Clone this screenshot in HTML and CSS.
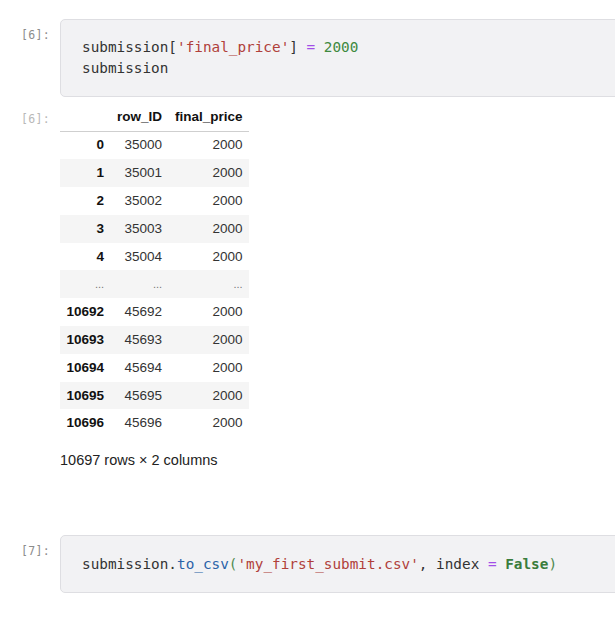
FILE: index.html
```html
<!DOCTYPE html>
<html>
<head>
<meta charset="utf-8">
<link rel="stylesheet" href="styles.css">
</head>
<body>
<div class="notebook">
  <div class="cell cell-first">
    <div class="prompt in-prompt">[6]:</div>
    <div class="input"><pre class="code">submission[<span class="str">'final_price'</span>] <span class="op">=</span> <span class="num">2000</span>
submission</pre></div>
  </div>
  <div class="cell output-cell">
    <div class="prompt out-prompt">[6]:</div>
    <div class="output">
      <table class="df">
        <thead>
          <tr><th></th><th>row_ID</th><th>final_price</th></tr>
        </thead>
        <tbody>
          <tr><th>0</th><td>35000</td><td>2000</td></tr>
          <tr><th>1</th><td>35001</td><td>2000</td></tr>
          <tr><th>2</th><td>35002</td><td>2000</td></tr>
          <tr><th>3</th><td>35003</td><td>2000</td></tr>
          <tr><th>4</th><td>35004</td><td>2000</td></tr>
          <tr class="ell"><th>...</th><td>...</td><td>...</td></tr>
          <tr><th>10692</th><td>45692</td><td>2000</td></tr>
          <tr><th>10693</th><td>45693</td><td>2000</td></tr>
          <tr><th>10694</th><td>45694</td><td>2000</td></tr>
          <tr><th>10695</th><td>45695</td><td>2000</td></tr>
          <tr><th>10696</th><td>45696</td><td>2000</td></tr>
        </tbody>
      </table>
      <p class="shape">10697 rows × 2 columns</p>
    </div>
  </div>
  <div class="cell cell-second">
    <div class="prompt in-prompt">[7]:</div>
    <div class="input input-short"><pre class="code">submission<span class="dot">.</span><span class="fn">to_csv</span><span class="par">(</span><span class="str">'my_first_submit.csv'</span>, index <span class="op">=</span> <span class="kw">False</span><span class="par">)</span></pre></div>
  </div>
</div>
</body>
</html>
```

FILE: styles.css
```css
html, body {
  margin: 0;
  padding: 0;
  background: #ffffff;
  overflow: hidden;
}

.notebook {
  width: 640px;
  font-family: "Liberation Sans", Arial, sans-serif;
  color: #222;
}

.cell {
  display: flex;
  align-items: flex-start;
}

.cell-first {
  margin-top: 19px;
}

.prompt {
  width: 60px;
  flex: none;
  box-sizing: border-box;
  padding-right: 10px;
  text-align: right;
  font-family: "DejaVu Sans Mono", monospace;
  font-size: 11.5px;
  line-height: 14px;
  letter-spacing: 0.3px;
}

.in-prompt {
  color: #8c8c8c;
  padding-top: 9px;
}

.out-prompt {
  color: #b8b8b8;
  padding-top: 8px;
}

.input {
  flex: 1;
  background: #f2f2f4;
  border: 1px solid #dedee2;
  border-radius: 5px;
  padding: 17px 0 17px 21px;
}

.input-short {
  padding: 18px 0 17px 21px;
}

.code {
  margin: 0;
  font-family: "DejaVu Sans Mono", monospace;
  font-size: 14.35px;
  line-height: 21px;
  color: #333;
}

.str { color: #b0403a; }
.op { color: #a34ee8; }
.num { color: #3f8a3f; }
.fn { color: #2a63a8; }
.par { color: #4f8a50; }
.dot { color: #333; }
.kw { color: #3a7d3c; font-weight: bold; }

.output-cell {
  margin-top: 6.5px;
}

.output {
  flex: 1;
}

.df {
  border-collapse: collapse;
  font-size: 13.5px;
  color: #333;
}

.df th, .df td {
  padding: 0 6.5px;
  height: 27.8px;
  line-height: 14px;
  text-align: right;
  vertical-align: middle;
}

.df thead th {
  height: 27px;
  color: #111;
  font-weight: bold;
  border-bottom: 1px solid #cfcfcf;
}

.df tbody th {
  color: #111;
  font-weight: bold;
}

.df tbody tr:nth-child(even) {
  background: #f5f5f5;
}

.df tr.ell th, .df tr.ell td {
  font-weight: normal;
  color: #777;
  font-size: 11px;
}

.shape {
  margin: 15px 0 0 0;
  font-size: 14.5px;
  line-height: 17px;
  color: #222;
}

.cell-second {
  margin-top: 65.5px;
}
```
